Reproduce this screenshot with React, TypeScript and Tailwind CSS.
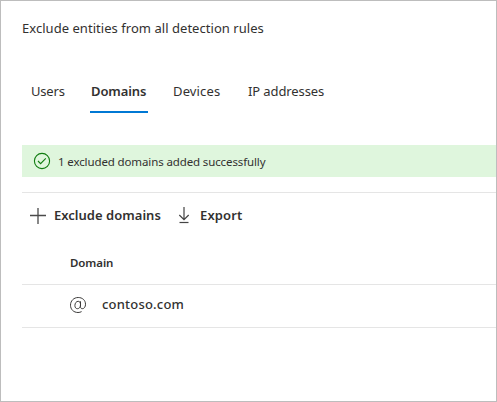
const tabs = [
  { label: "Users", active: false, cls: "w-[60px] tracking-[-0.2px]" },
  { label: "Domains", active: true, cls: "w-[82px] tracking-[-0.1px]" },
  { label: "Devices", active: false, cls: "w-[75px] tracking-[0.15px]" },
  { label: "IP addresses", active: false, cls: "w-[90px] tracking-[-0.1px]" },
];

function CheckCircle() {
  return (
    <svg width="18" height="18" viewBox="0 0 18 18" fill="none" stroke="#107c10" strokeWidth="1.1" className="shrink-0">
      <circle cx="9" cy="9" r="7.6" />
      <path d="M5 9 7.6 11.6 12.8 6.4" />
    </svg>
  );
}

function Plus() {
  return (
    <svg width="16" height="16" viewBox="0 0 16 16" fill="none" stroke="#4a4a4a" strokeWidth="1.3" className="shrink-0">
      <path d="M8 0v16M0 7.5h16" />
    </svg>
  );
}

function Download() {
  return (
    <svg width="12" height="17" viewBox="0 0 12 17" fill="none" stroke="#444444" strokeWidth="1.2" className="shrink-0">
      <path d="M6 0v12.6M1.3 8 6 12.7 10.7 8" />
      <path d="M1.5 15.5h9" />
    </svg>
  );
}

function At() {
  return (
    <svg width="16" height="16" viewBox="0 0 16 16" fill="none" stroke="#3b3a39" strokeWidth="1" className="shrink-0">
      <path d="M11.6 14.6C10.5 15.2 9.4 15.5 8 15.5 3.6 15.5.5 12.4.5 8.2.5 3.8 3.8.5 8.2.5c4.2 0 7.3 2.8 7.3 6.7 0 2.7-1.3 4.5-3.2 4.5-1.2 0-1.8-.8-1.8-2V4.3" />
      <path d="M10.5 7.7c0 2.3-1.2 4-3.1 4-1.5 0-2.5-1.2-2.5-3.1 0-2.5 1.4-4.3 3.3-4.3 1.4 0 2.3 1.1 2.3 3.4Z" />
    </svg>
  );
}

export default function App() {
  return (
    <div className="h-[402px] w-[497px] overflow-hidden border border-[#bdbdbd] bg-white pl-[21px] font-['Noto_Sans',sans-serif] text-[#323130]">
      <h1 className="h-[68px] pt-[17px] text-[13px] leading-5 tracking-[0.04px] whitespace-nowrap">
        Exclude entities from all detection rules
      </h1>
      <nav className="flex h-[76px] pt-[12px] pl-[8px] text-[13px] leading-5">
        {tabs.map((t) => (
          <div key={t.label} className={t.cls}>
            <span className={t.active ? "block h-[32px] w-[58px] border-b-2 border-[#0078d4] pl-px font-semibold whitespace-nowrap" : "block pl-px whitespace-nowrap"}>
              {t.label}
            </span>
          </div>
        ))}
      </nav>
      <div className="flex h-8 items-center bg-[#dff6dd] pl-[11px]">
        <CheckCircle />
        <span className="mt-px ml-[7px] text-[11.5px] leading-4 tracking-[-0.12px] whitespace-nowrap">1 excluded domains added successfully</span>
      </div>
      <div className="mt-[15px] flex h-[46px] items-center border-t border-[#e5e5e5] pl-[8px] text-[13px] font-semibold">
        <Plus />
        <span className="ml-[8px] w-[124px] tracking-[0.02px] whitespace-nowrap">Exclude domains</span>
        <Download />
        <span className="ml-[10px] tracking-[0.15px]">Export</span>
      </div>
      <div className="flex h-[47px] items-center border-b border-[#e5e5e5] pt-[3px] pl-[48px] text-[11.5px] font-semibold">
        <span className="tracking-[-0.1px]">Domain</span>
      </div>
      <div className="flex h-[43px] items-center border-b border-[#e5e5e5] pb-[2px] pl-[48px]">
        <At />
        <span className="ml-[16px] pb-[2px] text-[13px] leading-5 font-medium tracking-[0.2px]">contoso.com</span>
      </div>
    </div>
  );
}
